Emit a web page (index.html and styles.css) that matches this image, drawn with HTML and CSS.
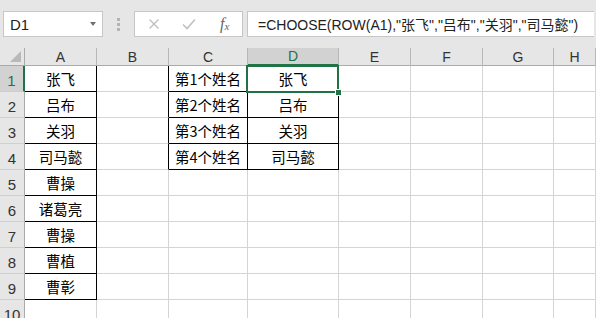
FILE: index.html
```html
<!DOCTYPE html>
<html>
<head>
<meta charset="utf-8">
<link rel="stylesheet" href="styles.css">
</head>
<body>
<div class="bar">
  <div class="namebox"><span class="nb-text">D1</span><span class="nb-arrow"></span></div>
  <div class="grip"><i></i><i></i><i></i></div>
  <div class="fxbox">
    <svg class="ic-x" width="12" height="12" viewBox="0 0 12 12"><path d="M1.5 1.5L10.5 10.5M10.5 1.5L1.5 10.5" stroke="#c0c0c0" stroke-width="1.4" fill="none"/></svg>
    <svg class="ic-ok" width="14" height="12" viewBox="0 0 14 12"><path d="M1 6.5L5 10.5L13 1.5" stroke="#c0c0c0" stroke-width="1.6" fill="none"/></svg>
    <span class="fx"><i>f</i><sub>x</sub></span>
  </div>
  <div class="formula">=CHOOSE(ROW(A1),"张飞","吕布","关羽","司马懿")</div>
</div>
<div class="sheet">
  <div class="corner"><span class="tri"></span></div>
  <div class="ch">A</div><div class="ch">B</div><div class="ch">C</div><div class="ch hl">D</div><div class="ch">E</div><div class="ch">F</div><div class="ch">G</div><div class="ch">H</div>

  <div class="rh hl">1</div>
  <div class="c bx">张飞</div><div class="c rbk"></div><div class="c bx">第1个姓名</div><div class="c bx sel">张飞</div><div class="c"></div><div class="c"></div><div class="c"></div><div class="c"></div>

  <div class="rh">2</div>
  <div class="c bx">吕布</div><div class="c rbk"></div><div class="c bx">第2个姓名</div><div class="c bx">吕布</div><div class="c"></div><div class="c"></div><div class="c"></div><div class="c"></div>

  <div class="rh">3</div>
  <div class="c bx">关羽</div><div class="c rbk"></div><div class="c bx">第3个姓名</div><div class="c bx">关羽</div><div class="c"></div><div class="c"></div><div class="c"></div><div class="c"></div>

  <div class="rh">4</div>
  <div class="c bx">司马懿</div><div class="c rbk"></div><div class="c bx">第4个姓名</div><div class="c bx">司马懿</div><div class="c"></div><div class="c"></div><div class="c"></div><div class="c"></div>

  <div class="rh">5</div>
  <div class="c bx">曹操</div><div class="c"></div><div class="c"></div><div class="c"></div><div class="c"></div><div class="c"></div><div class="c"></div><div class="c"></div>

  <div class="rh">6</div>
  <div class="c bx">诸葛亮</div><div class="c"></div><div class="c"></div><div class="c"></div><div class="c"></div><div class="c"></div><div class="c"></div><div class="c"></div>

  <div class="rh">7</div>
  <div class="c bx">曹操</div><div class="c"></div><div class="c"></div><div class="c"></div><div class="c"></div><div class="c"></div><div class="c"></div><div class="c"></div>

  <div class="rh">8</div>
  <div class="c bx">曹植</div><div class="c"></div><div class="c"></div><div class="c"></div><div class="c"></div><div class="c"></div><div class="c"></div><div class="c"></div>

  <div class="rh">9</div>
  <div class="c bx">曹彰</div><div class="c"></div><div class="c"></div><div class="c"></div><div class="c"></div><div class="c"></div><div class="c"></div><div class="c"></div>

  <div class="rh">10</div>
  <div class="c"></div><div class="c"></div><div class="c"></div><div class="c"></div><div class="c"></div><div class="c"></div><div class="c"></div><div class="c"></div>
</div>
</body>
</html>
```
FILE: styles.css
```css
html, body {
  margin: 0;
  padding: 0;
}
body {
  width: 596px;
  height: 318px;
  overflow: hidden;
  background: #fff;
  font-family: "Noto Sans CJK SC", sans-serif;
  color: #000;
}
.bar {
  height: 48px;
  box-sizing: border-box;
  background: #e6e6e6;
  display: flex;
  align-items: flex-start;
  padding: 11px 0 0 3px;
}
.namebox {
  width: 100px;
  height: 26px;
  box-sizing: border-box;
  background: #fff;
  border: 1px solid #c6c6c6;
  display: flex;
  align-items: center;
  justify-content: space-between;
  padding: 0 6px 0 6px;
  font: 15px "Liberation Sans", sans-serif;
  color: #222;
}
.nb-arrow {
  width: 0;
  height: 0;
  border-left: 3.5px solid transparent;
  border-right: 3.5px solid transparent;
  border-top: 4px solid #707070;
}
.grip {
  width: 31px;
  height: 26px;
  display: flex;
  flex-direction: column;
  align-items: center;
  justify-content: center;
  gap: 2px;
}
.grip i {
  display: block;
  width: 3px;
  height: 3px;
  background: #b4b4b4;
}
.fxbox {
  width: 109px;
  height: 26px;
  box-sizing: border-box;
  background: #fff;
  border: 1px solid #c6c6c6;
  display: flex;
  align-items: center;
  padding-left: 13px;
}
.ic-x {
  margin-right: 22px;
}
.ic-ok {
  margin-right: 24px;
}
.fx {
  font-family: "Liberation Serif", serif;
  font-size: 16px;
  color: #666;
  line-height: 1;
}
.fx i {
  font-style: italic;
}
.fx sub {
  font-size: 11px;
  font-style: italic;
  vertical-align: -1px;
}
.formula {
  flex: 1;
  height: 26px;
  box-sizing: border-box;
  margin-left: 4px;
  margin-right: 2px;
  background: #fff;
  border: 1px solid #c6c6c6;
  border-right: none;
  display: flex;
  align-items: center;
  padding-left: 10px;
  font: 14px "Liberation Sans", "Noto Sans CJK SC", sans-serif;
  color: #222;
  white-space: nowrap;
  overflow: hidden;
}
.sheet {
  display: grid;
  grid-template-columns: 25px 72px 72px 79px 91px 72px 72px 71px 1fr;
  grid-template-rows: 18px repeat(10, 26px);
}
.corner {
  background: #e6e6e6;
  border-right: 1px solid #ababab;
  border-bottom: 1px solid #ababab;
  box-sizing: border-box;
  position: relative;
}
.tri {
  position: absolute;
  right: 3px;
  bottom: 3px;
  width: 0;
  height: 0;
  border-left: 11px solid transparent;
  border-bottom: 11px solid #b9b9b9;
}
.ch {
  background: #e6e6e6;
  border-right: 1px solid #b8b8b8;
  border-bottom: 1px solid #ababab;
  box-sizing: border-box;
  display: flex;
  align-items: center;
  justify-content: center;
  font: 14px "Liberation Sans", sans-serif;
  color: #333;
}
.ch.hl {
  background: #d2d2d2;
  color: #217346;
  border-bottom: 2px solid #217346;
}
.rh {
  background: #e6e6e6;
  border-right: 1px solid #ababab;
  border-bottom: 1px solid #cfcfcf;
  box-sizing: border-box;
  display: flex;
  align-items: flex-end;
  justify-content: center;
  padding-bottom: 2px;
  font: 15px "Liberation Sans", sans-serif;
  color: #333;
}
.rh.hl {
  background: #d2d2d2;
  color: #217346;
  border-right: 2px solid #217346;
}
.c {
  box-sizing: border-box;
  border-right: 1px solid #d4d4d4;
  border-bottom: 1px solid #d4d4d4;
  display: flex;
  align-items: center;
  justify-content: center;
  padding-top: 2px;
  font-size: 14.5px;
  line-height: 1;
  white-space: nowrap;
}
.c.bx {
  border-right-color: #000;
  border-bottom-color: #000;
}
.c.rbk {
  border-right-color: #000;
}
.c.sel {
  position: relative;
  z-index: 2;
}
.c.sel::after {
  content: "";
  position: absolute;
  left: -2px;
  top: -1px;
  right: -1px;
  bottom: -2px;
  border: 2px solid #217346;
}
.c.sel::before {
  content: "";
  position: absolute;
  right: -4px;
  bottom: -5px;
  width: 5px;
  height: 5px;
  background: #217346;
  border: 1px solid #fff;
  z-index: 3;
}
```
